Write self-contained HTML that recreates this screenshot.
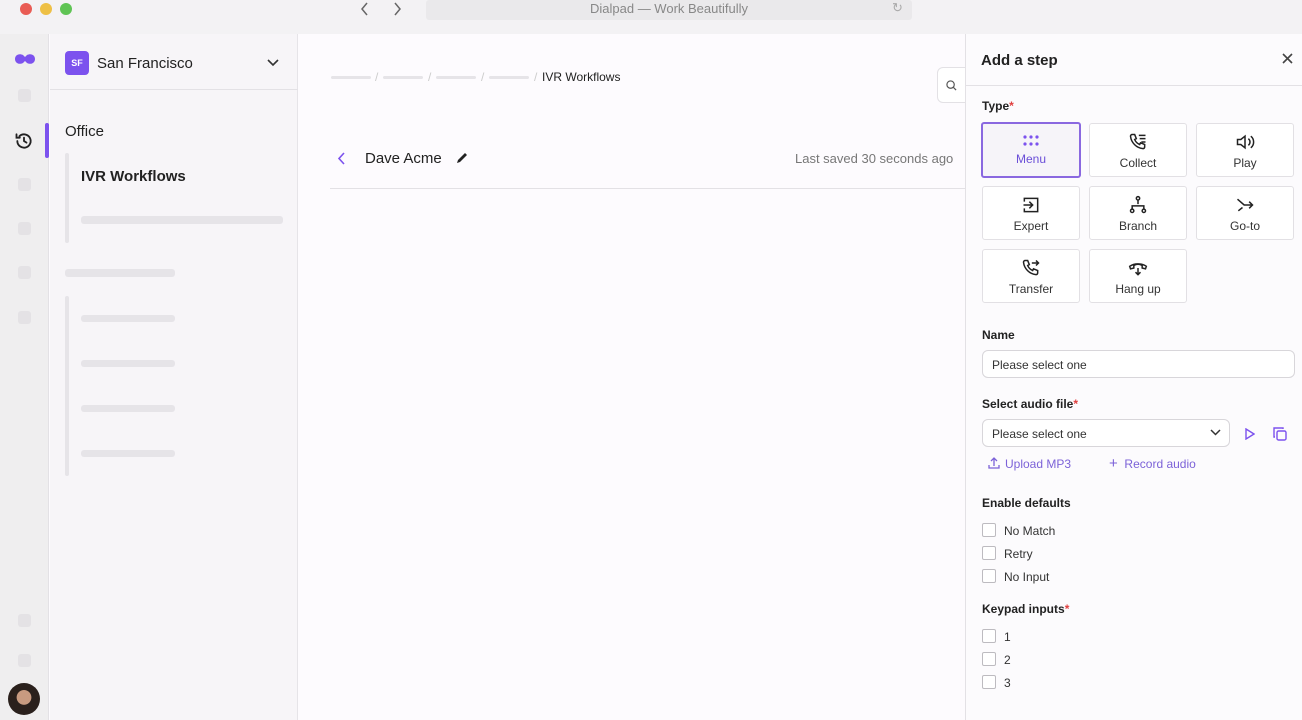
<!DOCTYPE html>
<html><head><meta charset="utf-8"><style>
*{box-sizing:border-box;margin:0;padding:0}
body{width:1302px;height:720px;overflow:hidden;font-family:"Liberation Sans",sans-serif;background:#fdfbfe;position:relative;color:#222}
.abs{position:absolute}
.bar{background:#e6e4e8;border-radius:3px}
.sq{position:absolute;left:18px;width:13px;height:13px;background:#e4e2e5;border-radius:3px}
.tile{position:absolute;width:98px;height:54px;border:1px solid #e2e0e4;border-radius:3px;background:#fff;text-align:center;font-size:12px;color:#333}
.tile svg{display:block;margin:8px auto 4px}
.lbl{position:absolute;left:982px;font-size:12px;font-weight:bold;color:#222}
.cb{position:absolute;left:982px;width:14px;height:14px;border:1px solid #bdbbc0;border-radius:2px;background:#fff}
.cbt{position:absolute;left:1004px;font-size:12px;color:#333}
.req{color:#e04040}
.sl{position:absolute;top:70px;font-size:12px;color:#ccc}
</style></head><body>
<!-- titlebar -->
<div class="abs" style="left:0;top:0;width:1302px;height:34px;background:#f3f2f4"></div>
<div class="abs" style="left:20px;top:3px;width:12px;height:12px;border-radius:50%;background:#e95c54"></div>
<div class="abs" style="left:40px;top:3px;width:12px;height:12px;border-radius:50%;background:#eec045"></div>
<div class="abs" style="left:60px;top:3px;width:12px;height:12px;border-radius:50%;background:#5fc454"></div>
<svg class="abs" style="left:360px;top:2px" width="10" height="14" viewBox="0 0 10 14"><path d="M7 1L2 7l5 6" stroke="#666" stroke-width="1.5" fill="none"/></svg>
<svg class="abs" style="left:392px;top:2px" width="10" height="14" viewBox="0 0 10 14"><path d="M3 1l5 6-5 6" stroke="#666" stroke-width="1.5" fill="none"/></svg>
<div class="abs" style="left:426px;top:0;width:486px;height:20px;background:#eae9eb;border-radius:3px;text-align:center;font-size:13px;color:#888;line-height:17px">Dialpad — Work Beautifully</div>
<div class="abs" style="left:892px;top:0;font-size:13px;color:#aaa">&#8635;</div>
<!-- rail -->
<div class="abs" style="left:0;top:34px;width:49px;height:686px;background:#efeeef;border-right:1px solid #e3e1e5"></div>
<svg class="abs" style="left:14px;top:52px" width="22" height="14" viewBox="0 0 22 14"><path d="M1 7c0-4 4-6 8-4l2 2 2-2c4-2 8 0 8 4s-4 6-8 4l-2-2-2 2C5 13 1 11 1 7z" fill="#7c52ee"/></svg>
<div class="sq" style="top:89px"></div>
<svg class="abs" style="left:14px;top:131px" width="20" height="20" viewBox="0 0 24 24" fill="none" stroke="#222" stroke-width="2.2" stroke-linecap="round"><path d="M4 12a8 8 0 1 0 2.5-5.8M3 4v4h4M12 8v4l3 2"/></svg>
<div class="abs" style="left:45px;top:123px;width:4px;height:35px;background:#7c52ee;border-radius:2px"></div>
<div class="sq" style="top:178px"></div><div class="sq" style="top:222px"></div><div class="sq" style="top:266px"></div><div class="sq" style="top:311px"></div><div class="sq" style="top:614px"></div><div class="sq" style="top:654px"></div>
<div class="abs" style="left:8px;top:683px;width:32px;height:32px;border-radius:50%;background:radial-gradient(circle at 50% 45%,#c89a80 0 30%,#2a201c 32%)"></div>
<!-- sidebar -->
<div class="abs" style="left:50px;top:34px;width:248px;height:686px;background:#f7f5f8;border-right:1px solid #e6e4e8"></div>
<div class="abs" style="left:50px;top:89px;width:248px;height:1px;background:#e3e1e5"></div>
<div class="abs" style="left:65px;top:51px;width:24px;height:24px;border-radius:4px;background:#7c52ee;color:#fff;font-size:9px;font-weight:bold;text-align:center;line-height:24px">SF</div>
<div class="abs" style="left:97px;top:55px;font-size:15px;color:#222">San Francisco</div>
<svg class="abs" style="left:266px;top:58px" width="14" height="10" viewBox="0 0 14 10"><path d="M2 2l5 5 5-5" stroke="#333" stroke-width="1.6" fill="none"/></svg>
<div class="abs" style="left:65px;top:123px;font-size:15px;color:#222">Office</div>
<div class="abs" style="left:65px;top:153px;width:4px;height:90px;background:#e6e4e8;border-radius:2px"></div>
<div class="abs" style="left:81px;top:168px;font-size:15px;font-weight:bold;color:#222">IVR Workflows</div>
<div class="bar abs" style="left:81px;top:216px;width:202px;height:8px"></div>
<div class="bar abs" style="left:65px;top:269px;width:110px;height:8px"></div>
<div class="abs" style="left:65px;top:296px;width:4px;height:180px;background:#e6e4e8;border-radius:2px"></div>
<div class="bar abs" style="left:81px;top:315px;width:94px;height:7px"></div>
<div class="bar abs" style="left:81px;top:360px;width:94px;height:7px"></div>
<div class="bar abs" style="left:81px;top:405px;width:94px;height:7px"></div>
<div class="bar abs" style="left:81px;top:450px;width:94px;height:7px"></div>
<!-- main -->
<div class="bar abs" style="left:331px;top:76px;width:40px;height:3px"></div>
<div class="bar abs" style="left:383px;top:76px;width:40px;height:3px"></div>
<div class="bar abs" style="left:436px;top:76px;width:40px;height:3px"></div>
<div class="bar abs" style="left:489px;top:76px;width:40px;height:3px"></div>
<div class="sl" style="left:375px">/</div><div class="sl" style="left:428px">/</div><div class="sl" style="left:481px">/</div><div class="sl" style="left:534px">/</div>
<div class="abs" style="left:542px;top:70px;font-size:12px;color:#222">IVR Workflows</div>
<div class="abs" style="left:937px;top:67px;width:40px;height:36px;border:1px solid #e3e1e5;border-radius:6px;background:#fff"></div>
<svg class="abs" style="left:946px;top:80px" width="11" height="11" viewBox="0 0 12 12"><circle cx="5" cy="5" r="4" stroke="#555" stroke-width="1.3" fill="none"/><path d="M8 8l3 3" stroke="#555" stroke-width="1.3"/></svg>
<svg class="abs" style="left:337px;top:152px" width="9" height="13" viewBox="0 0 9 13"><path d="M7 1L2 6.5 7 12" stroke="#7c52ee" stroke-width="1.6" fill="none"/></svg>
<div class="abs" style="left:365px;top:150px;font-size:15px;color:#222">Dave Acme</div>
<svg class="abs" style="left:455px;top:151px" width="14" height="14" viewBox="0 0 14 14"><path d="M2 12l1-3 7-7 2 2-7 7z" fill="#222"/></svg>
<div class="abs" style="left:795px;top:151px;font-size:13px;color:#777">Last saved 30 seconds ago</div>
<div class="abs" style="left:330px;top:188px;width:636px;height:1px;background:#e3e1e5"></div>
<!-- panel -->
<div class="abs" style="left:965px;top:34px;width:337px;height:686px;background:#fcfbfd;border-left:1px solid #e3e1e5"></div>
<div class="abs" style="left:966px;top:85px;width:336px;height:1px;background:#e3e1e5"></div>
<div class="abs" style="left:981px;top:52px;font-size:15px;font-weight:bold;color:#222">Add a step</div>
<svg class="abs" style="left:1282px;top:53px" width="11" height="11" viewBox="0 0 11 11"><path d="M1 1l9 9M10 1l-9 9" stroke="#444" stroke-width="1.6"/></svg>
<div class="lbl" style="top:99px">Type<span class="req">*</span></div>
<div class="tile" style="left:981px;top:122px;width:100px;height:56px;border:2px solid #8a68e0;color:#6a4ed8;background:#f6f4f9"><svg width="20" height="14" viewBox="0 0 20 14" style="margin-top:10px"><g fill="#7c52ee"><circle cx="4" cy="3" r="1.6"/><circle cx="10" cy="3" r="1.6"/><circle cx="16" cy="3" r="1.6"/><circle cx="4" cy="10" r="1.6"/><circle cx="10" cy="10" r="1.6"/><circle cx="16" cy="10" r="1.6"/></g></svg>Menu</div>
<div class="tile" style="left:1089px;top:123px"><svg width="20" height="20" viewBox="0 0 24 24" fill="none" stroke="#222" stroke-width="1.8"><path d="M5 3h3l2 5-2 1a11 11 0 0 0 6 6l1-2 5 2v3a2 2 0 0 1-2 2A17 17 0 0 1 3 5a2 2 0 0 1 2-2zM13 4h8M14 8h7M16 12h5"/></svg>Collect</div>
<div class="tile" style="left:1196px;top:123px"><svg width="20" height="20" viewBox="0 0 24 24" fill="none" stroke="#222" stroke-width="1.8"><path d="M3 9h4l5-4v14l-5-4H3zM16 8a5 5 0 0 1 0 8M19 5a9 9 0 0 1 0 14"/></svg>Play</div>
<div class="tile" style="left:982px;top:186px"><svg width="20" height="20" viewBox="0 0 24 24" fill="none" stroke="#222" stroke-width="1.8"><path d="M4 8V4h16v16H4v-4M3 12h10M10 8l4 4-4 4"/></svg>Expert</div>
<div class="tile" style="left:1089px;top:186px"><svg width="20" height="20" viewBox="0 0 24 24" fill="none" stroke="#222" stroke-width="1.8"><circle cx="12" cy="4" r="2"/><circle cx="5" cy="19" r="2"/><circle cx="19" cy="19" r="2"/><path d="M12 6v5M5 17v-4h14v4"/></svg>Branch</div>
<div class="tile" style="left:1196px;top:186px"><svg width="20" height="20" viewBox="0 0 24 24" fill="none" stroke="#222" stroke-width="1.8"><path d="M3 5l8 7h10M17 8l4 4-4 4M9 15l-5 4"/></svg>Go-to</div>
<div class="tile" style="left:982px;top:249px"><svg width="20" height="20" viewBox="0 0 24 24" fill="none" stroke="#222" stroke-width="1.8"><path d="M5 3h3l2 5-2 1a11 11 0 0 0 6 6l1-2 5 2v3a2 2 0 0 1-2 2A17 17 0 0 1 3 5a2 2 0 0 1 2-2zM13 6h8M18 3l3 3-3 3"/></svg>Transfer</div>
<div class="tile" style="left:1089px;top:249px"><svg width="22" height="20" viewBox="0 0 24 24" fill="none" stroke="#222" stroke-width="1.8"><path d="M2 10a14 10 0 0 1 20 0l-1 3-4-1V9a10 10 0 0 0-10 0v3l-4 1zM12 12v8M9 17l3 3 3-3"/></svg>Hang up</div>
<div class="lbl" style="top:328px">Name</div>
<div class="abs" style="left:982px;top:350px;width:313px;height:28px;border:1px solid #d8d6da;border-radius:6px;background:#fff;font-size:12px;padding:7px 9px;color:#333">Please select one</div>
<div class="lbl" style="top:397px">Select audio file<span class="req">*</span></div>
<div class="abs" style="left:982px;top:419px;width:248px;height:28px;border:1px solid #d8d6da;border-radius:6px;background:#fff;font-size:12px;padding:7px 9px;color:#333">Please select one</div>
<svg class="abs" style="left:1210px;top:429px" width="11" height="8" viewBox="0 0 11 8"><path d="M1 1l4.5 4.5L10 1" stroke="#333" stroke-width="1.5" fill="none"/></svg>
<svg class="abs" style="left:1244px;top:428px" width="11" height="12" viewBox="0 0 11 12"><path d="M2 1l8 5-8 5z" stroke="#7c52ee" stroke-width="1.4" fill="none"/></svg>
<svg class="abs" style="left:1273px;top:427px" width="14" height="14" viewBox="0 0 14 14" fill="none" stroke="#7c52ee" stroke-width="1.4"><rect x="4" y="4" width="9" height="9" rx="1.5"/><path d="M10 2V1H1v9h1"/></svg>
<svg class="abs" style="left:988px;top:457px" width="12" height="12" viewBox="0 0 12 12" fill="none" stroke="#7c62d8" stroke-width="1.3"><path d="M6 9V1M3 4l3-3 3 3M1 8v3h10V8"/></svg>
<div class="abs" style="left:1005px;top:457px;font-size:12px;color:#7c62d8">Upload MP3</div>
<div class="abs" style="left:1109px;top:455px;font-size:12px;color:#7c62d8"><span style="font-size:15px">+</span>&nbsp; Record audio</div>
<div class="lbl" style="top:496px">Enable defaults</div>
<div class="cb" style="top:523px"></div><div class="cbt" style="top:524px">No Match</div>
<div class="cb" style="top:546px"></div><div class="cbt" style="top:547px">Retry</div>
<div class="cb" style="top:569px"></div><div class="cbt" style="top:570px">No Input</div>
<div class="lbl" style="top:602px">Keypad inputs<span class="req">*</span></div>
<div class="cb" style="top:629px"></div><div class="cbt" style="top:630px">1</div>
<div class="cb" style="top:652px"></div><div class="cbt" style="top:653px">2</div>
<div class="cb" style="top:675px"></div><div class="cbt" style="top:676px">3</div>
</body></html>
